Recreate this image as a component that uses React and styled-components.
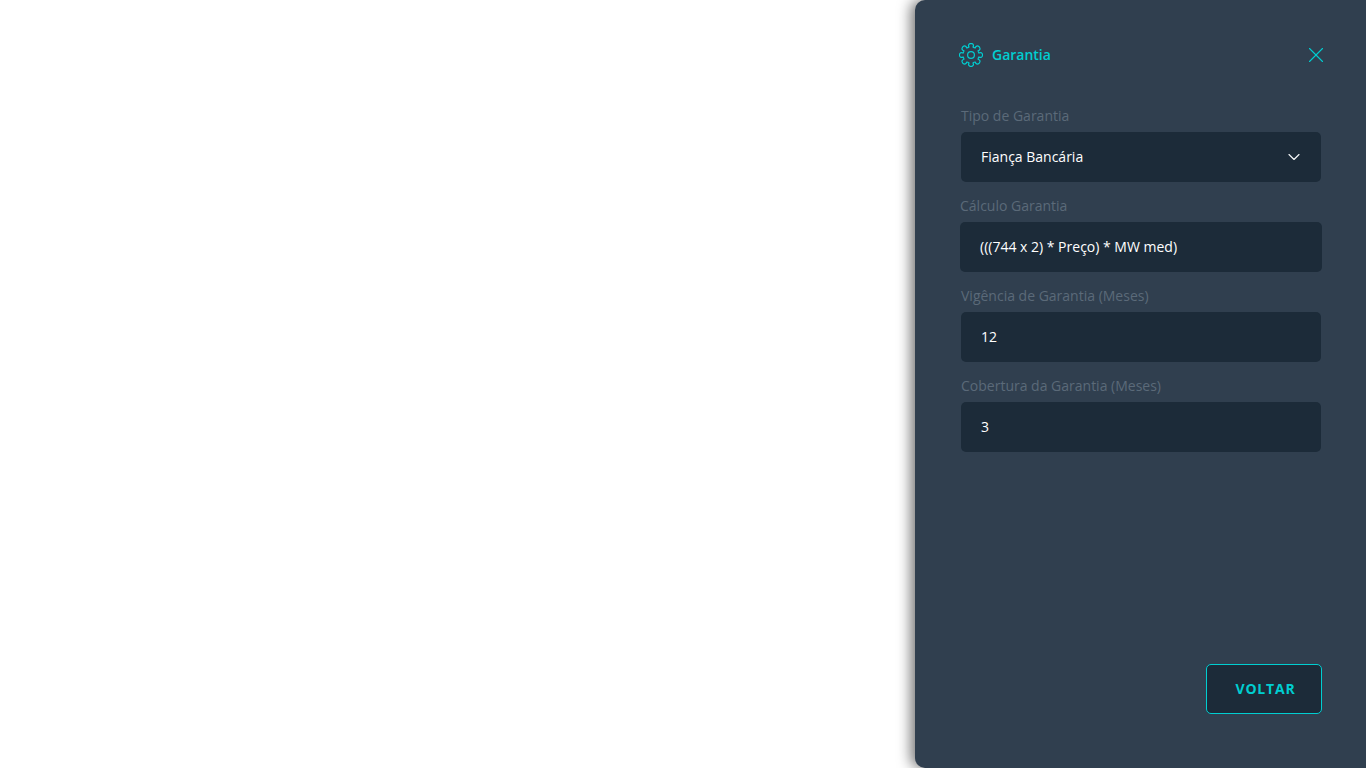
import React from "react";
import styled, { createGlobalStyle } from "styled-components";
import { ChevronDown, X } from "lucide-react";

const GlobalStyle = createGlobalStyle`
  html, body {
    margin: 0;
    height: 100%;
    background: #fff;
    font-family: "Open Sans", "Liberation Sans", sans-serif;
  }
`;

const Page = styled.div`
  display: flex;
  justify-content: flex-end;
  height: 768px;
  overflow: hidden;
`;

const Drawer = styled.aside`
  box-sizing: border-box;
  width: 451px;
  height: 768px;
  padding: 43px 45px 54px 46px;
  display: flex;
  flex-direction: column;
  background: #303f4f;
  border-radius: 10px 0 0 10px;
  box-shadow: -4px 0 14px rgba(0, 0, 0, 0.55);
`;

const Header = styled.header`
  display: flex;
  align-items: center;
  justify-content: space-between;
  height: 24px;
  margin-bottom: 39px;
  color: #00ced1;
`;

const Title = styled.h2`
  display: flex;
  align-items: center;
  gap: 9px;
  margin: 0 0 0 -2px;
  font-size: 14px;
  font-weight: 600;
  line-height: 24px;
`;

const CloseButton = styled.button`
  display: flex;
  flex: none;
  width: 26px;
  height: 26px;
  padding: 0;
  margin-right: -7.5px;
  border: 0;
  background: none;
  color: inherit;
`;

const Fields = styled.div`
  display: flex;
  flex-direction: column;
  gap: 14px;
`;

const Field = styled.label`
  display: flex;
  flex-direction: column;
  gap: 6px;
  margin: 0 ${(p) => (p.$wide ? "-1px" : "0")};
`;

const FieldLabel = styled.span`
  font-size: 14px;
  line-height: 20px;
  color: #5b6a79;
`;

const Control = styled.div`
  box-sizing: border-box;
  display: flex;
  align-items: center;
  justify-content: space-between;
  height: 50px;
  padding: 0 20px 2px;
  border-radius: 5px;
  background: #1c2b39;
  color: #fff;
  font-size: 14px;
`;

const Chevron = styled(ChevronDown)`
  margin: 2px -2.5px 0 0;
  color: #f2f5f7;
`;

const Footer = styled.footer`
  display: flex;
  justify-content: flex-end;
  margin-top: auto;
  margin-right: -1px;
`;

const BackButton = styled.button`
  box-sizing: border-box;
  width: 116px;
  height: 50px;
  padding: 0 0 2px 3px;
  border: 1px solid #00ced1;
  border-radius: 5px;
  background: #1c2b39;
  color: #00ced1;
  font-family: inherit;
  font-size: 14px;
  font-weight: 700;
  letter-spacing: 0.8px;
`;

// eight rounded teeth, the outline is the same for every tooth
const gearOutline = () => {
  const at = (r, deg) => {
    const a = (deg * Math.PI) / 180;
    return `${(12 + r * Math.sin(a)).toFixed(2)} ${(12 - r * Math.cos(a)).toFixed(2)}`;
  };
  let d = `M${at(8.2, -14)}`;
  for (let i = 0; i < 8; i++) {
    const c = i * 45;
    d += ` C${at(10.2, c - 17)} ${at(11.6, c - 12)} ${at(11.6, c)}`;
    d += ` C${at(11.6, c + 12)} ${at(10.2, c + 17)} ${at(8.2, c + 14)}`;
    d += ` Q${at(7.8, c + 22.5)} ${at(8.2, c + 31)}`;
  }
  return d + "Z";
};

const GearIcon = () => (
  <svg width="24" height="24" viewBox="0 0 24 24" fill="none" stroke="currentColor" strokeWidth="1.2">
    <path d={gearOutline()} strokeLinejoin="round" />
    <circle cx="12" cy="12" r="3.4" />
  </svg>
);

const fields = [
  { label: "Tipo de Garantia", value: "Fiança Bancária", select: true },
  { label: "Cálculo Garantia", value: "(((744 x 2) * Preço) * MW med)", wide: true },
  { label: "Vigência de Garantia (Meses)", value: "12" },
  { label: "Cobertura da Garantia (Meses)", value: "3" },
];

export default function App() {
  return (
    <Page>
      <GlobalStyle />
      <Drawer>
        <Header>
          <Title>
            <GearIcon />
            Garantia
          </Title>
          <CloseButton aria-label="Fechar">
            <X size={26} strokeWidth={1} />
          </CloseButton>
        </Header>
        <Fields>
          {fields.map((f) => (
            <Field key={f.label} $wide={f.wide}>
              <FieldLabel>{f.label}</FieldLabel>
              <Control>
                {f.value}
                {f.select && <Chevron size={20} strokeWidth={1.4} />}
              </Control>
            </Field>
          ))}
        </Fields>
        <Footer>
          <BackButton>VOLTAR</BackButton>
        </Footer>
      </Drawer>
    </Page>
  );
}
